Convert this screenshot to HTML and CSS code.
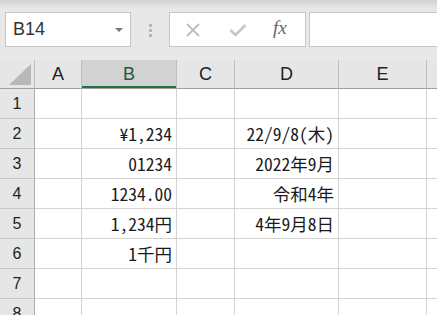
FILE: index.html
```html
<!DOCTYPE html>
<html lang="ja">

<head>
    <meta charset="UTF-8">
    <title>Book1 - Excel</title>
    <link rel="stylesheet" href="styles.css">
</head>

<body>

    <!-- Name box and formula bar -->
    <div class="toolbar">
        <div class="name-box">
            <span>B14</span>
            <span class="drop-arrow"></span>
        </div>
        <div class="grip">
            <span></span><span></span><span></span>
        </div>
        <div class="fx-box">
            <svg class="icon" width="16" height="14" viewBox="0 0 16 14">
                <path d="M2 1 L14 13 M14 1 L2 13" stroke="#bdbdbd" stroke-width="1.8" fill="none" />
            </svg>
            <svg class="icon" width="18" height="14" viewBox="0 0 18 14">
                <path d="M1.5 7 L6.5 12 L16.5 2" stroke="#c6c6c6" stroke-width="2.6" fill="none" />
            </svg>
            <span class="fx">fx</span>
        </div>
        <div class="formula-input"></div>
    </div>

    <!-- Sheet -->
    <table class="sheet">
        <colgroup>
            <col style="width: 35px">
            <col style="width: 47px">
            <col style="width: 95px">
            <col style="width: 58px">
            <col style="width: 104px">
            <col style="width: 88px">
            <col style="width: 60px">
        </colgroup>
        <tr class="col-head">
            <th class="corner"><span class="corner-tri"></span></th>
            <th>A</th>
            <th class="selected">B</th>
            <th>C</th>
            <th>D</th>
            <th>E</th>
            <th></th>
        </tr>
        <tr>
            <th class="row-head">1</th>
            <td></td><td></td><td></td><td></td><td></td><td></td>
        </tr>
        <tr>
            <th class="row-head">2</th>
            <td></td><td class="num">¥1,234</td><td></td><td class="num">22/9/8(木)</td><td></td><td></td>
        </tr>
        <tr>
            <th class="row-head">3</th>
            <td></td><td class="num">01234</td><td></td><td class="num">2022年9月</td><td></td><td></td>
        </tr>
        <tr>
            <th class="row-head">4</th>
            <td></td><td class="num">1234.00</td><td></td><td class="num">令和4年</td><td></td><td></td>
        </tr>
        <tr>
            <th class="row-head">5</th>
            <td></td><td class="num">1,234円</td><td></td><td class="num">4年9月8日</td><td></td><td></td>
        </tr>
        <tr>
            <th class="row-head">6</th>
            <td></td><td class="num">1千円</td><td></td><td></td><td></td><td></td>
        </tr>
        <tr>
            <th class="row-head">7</th>
            <td></td><td></td><td></td><td></td><td></td><td></td>
        </tr>
        <tr>
            <th class="row-head">8</th>
            <td></td><td></td><td></td><td></td><td></td><td></td>
        </tr>
    </table>

</body>

</html>
```

FILE: styles.css
```css
/* Basic Reset */
body {
    margin: 0;
    padding: 0;
    width: 437px;
    height: 315px;
    overflow: hidden;
    background-color: #ffffff;
    font-family: 'Noto Sans CJK JP', 'Noto Sans', sans-serif;
}

.toolbar {
    display: flex;
    align-items: flex-start;
    height: 60px;
    box-sizing: border-box;
    padding: 12px 0 0 5px;
    background: linear-gradient(#d2d2d2, #e8e8e8 9px, #e8e8e8);
}

.name-box {
    display: flex;
    align-items: center;
    justify-content: space-between;
    width: 126px;
    height: 35px;
    box-sizing: border-box;
    padding: 0 7px 0 7px;
    background-color: #ffffff;
    border: 1px solid #c6c6c6;
    font-family: 'Liberation Sans', sans-serif;
    font-size: 18px;
    color: #333333;
}

.drop-arrow {
    width: 0;
    height: 0;
    border-left: 4px solid transparent;
    border-right: 4px solid transparent;
    border-top: 4px solid #777777;
}

.grip {
    display: flex;
    flex-direction: column;
    gap: 2px;
    width: 38px;
    padding-top: 12px;
    align-items: center;
}

.grip span {
    width: 3px;
    height: 3px;
    background-color: #b6b6b6;
}

.fx-box {
    display: flex;
    align-items: center;
    width: 137px;
    height: 35px;
    box-sizing: border-box;
    padding-left: 15px;
    background-color: #ffffff;
    border: 1px solid #c6c6c6;
}

.fx-box .icon {
    margin-right: 28px;
}

.fx-box .icon + .icon {
    margin-right: 26px;
}

.fx {
    font-family: 'Liberation Serif', serif;
    font-style: italic;
    font-size: 19px;
    color: #666666;
    margin-top: -3px;
}

.formula-input {
    flex: 1;
    height: 35px;
    margin-left: 3px;
    box-sizing: border-box;
    background-color: #ffffff;
    border: 1px solid #c6c6c6;
    border-right: none;
}

/* Sheet grid */
.sheet {
    table-layout: fixed;
    width: 487px;
    border-collapse: separate;
    border-spacing: 0;
}

.sheet td,
.sheet th {
    box-sizing: border-box;
    height: 30px;
    padding: 0 4px 0 0;
    border-right: 1px solid #d4d4d4;
    border-bottom: 1px solid #d4d4d4;
}

.col-head th {
    height: 29px;
    padding: 0;
    background-color: #e6e6e6;
    border-right: 1px solid #bdbdbd;
    border-bottom: 1px solid #9e9e9e;
    font-family: 'Liberation Sans', sans-serif;
    font-weight: normal;
    font-size: 18px;
    color: #222222;
}

.col-head th.selected {
    background-color: #d2d2d2;
    color: #1e5b3c;
    box-shadow: inset 0 -2px 0 #217346;
}

.corner {
    position: relative;
}

.corner-tri {
    position: absolute;
    right: 3px;
    bottom: 3px;
    width: 0;
    height: 0;
    border-left: 22px solid transparent;
    border-bottom: 21px solid #b8b8b8;
}

.row-head {
    padding: 0;
    background-color: #e6e6e6;
    font-family: 'Liberation Sans', sans-serif;
    font-weight: normal;
    font-size: 16px;
    color: #222222;
    text-align: center;
}

.sheet th.row-head {
    border-right: 1px solid #aaaaaa;
    border-bottom: 1px solid #c8c8c8;
    padding: 0;
}

/* half-width latin, full-width kanji, like the sheet's gothic font */
.num {
    text-align: right;
    font-family: 'Noto Sans CJK JP', sans-serif;
    font-feature-settings: "hwid" 1;
    font-size: 17.5px;
    color: #1a1a1a;
    white-space: nowrap;
    padding-top: 2px;
}
```
